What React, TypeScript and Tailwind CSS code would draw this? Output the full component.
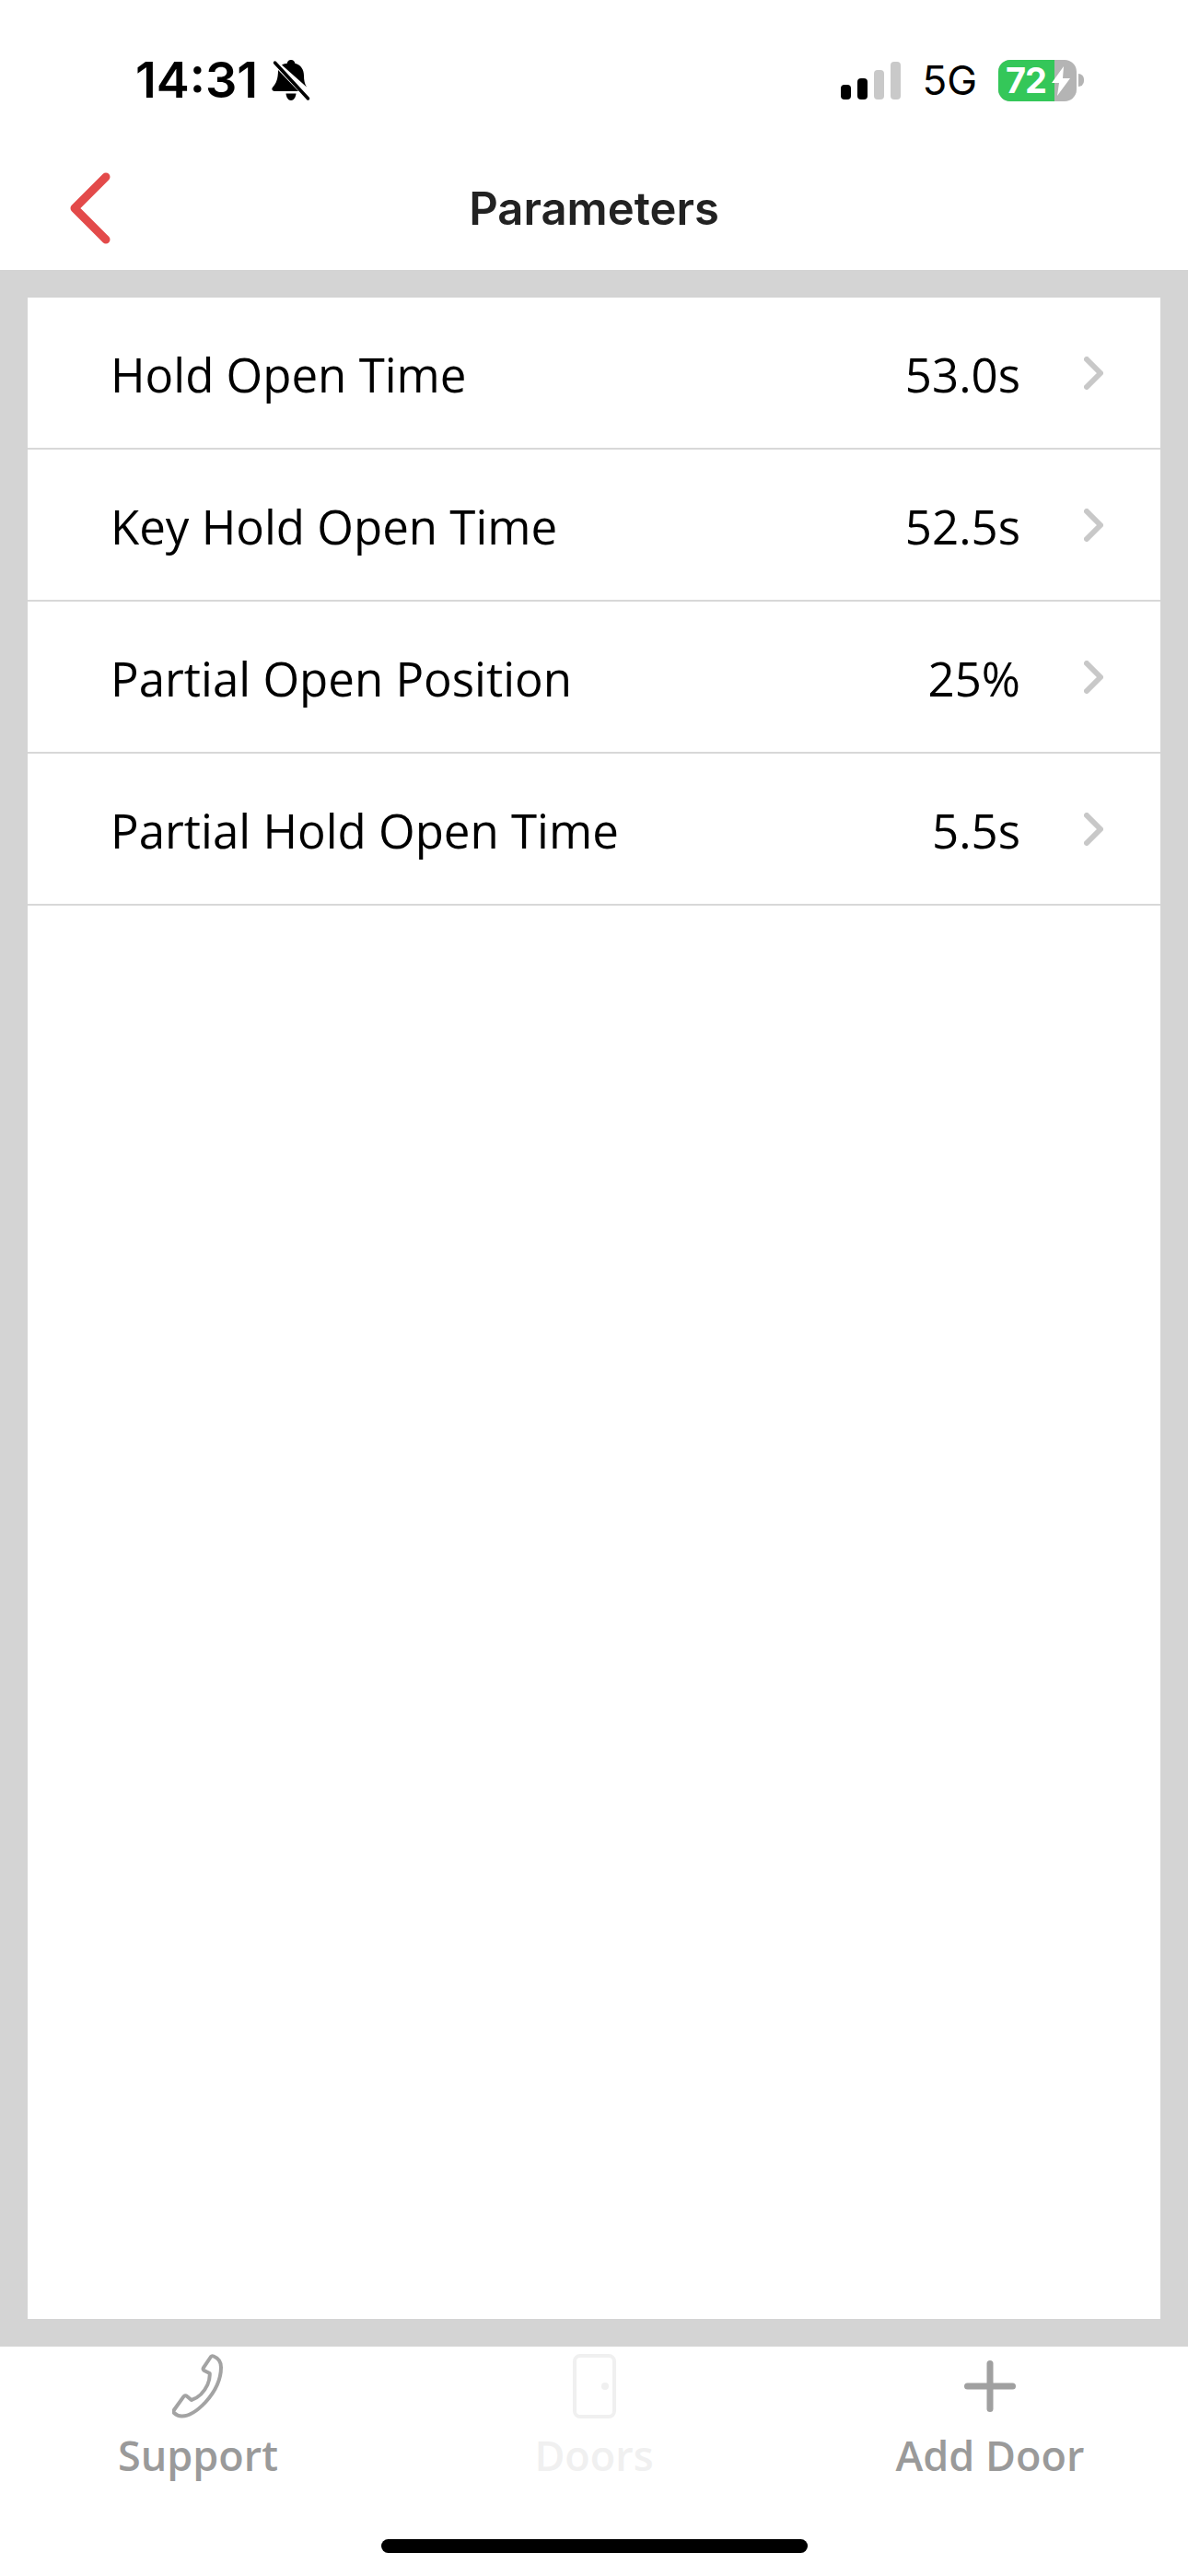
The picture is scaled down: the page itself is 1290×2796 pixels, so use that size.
import type { ReactNode } from "react";
import { Plus } from "lucide-react";

const params = [
  { label: "Hold Open Time", value: "53.0s" },
  { label: "Key Hold Open Time", value: "52.5s" },
  { label: "Partial Open Position", value: "25%" },
  { label: "Partial Hold Open Time", value: "5.5s" },
];

function MutedBell() {
  return (
    <svg viewBox="0 0 42 45" className="w-[42px] h-[45px]">
      <path
        d="M21 0c2.400 0 4 1.600 4.300 3.700 6.200 1.500 9.700 6.600 9.700 13.300 0 5 .7 9 3 12.500L11 5.500C13 4.200 15 4 16.800 3.700 17 1.600 18.600 0 21 0zM7 11 29 34H3.200C.8 34-.5 31.800.9 30c3.900-4.500 6.100-9 6.100-19zM15.500 36.500h11c-.3 4-2.600 7.500-5.500 7.500s-5.200-3.500-5.500-7.500z"
        fill="#000"
      />
      <path d="M3.500 3 39.500 42" stroke="#000" strokeWidth="3.500" strokeLinecap="round" />
    </svg>
  );
}

function Signal() {
  return (
    <div className="flex items-end gap-[7px] h-[41px]">
      <div className="w-[11px] h-[16px] rounded-[4px] bg-black" />
      <div className="w-[11px] h-[23px] rounded-[4px] bg-black" />
      <div className="w-[11px] h-[32px] rounded-[4px] bg-[#c9c9c9]" />
      <div className="w-[11px] h-[41px] rounded-[4px] bg-[#c9c9c9]" />
    </div>
  );
}

function Battery() {
  return (
    <div className="flex items-center gap-[2px]">
      <div className="relative w-[85px] h-[45px] rounded-[13px] overflow-hidden bg-[#b4b4b4] flex">
        <div className="w-[61px] bg-[#34c759]" />
        <span className="absolute left-[8px] top-0 h-[45px] leading-[45px] text-[38px] font-bold text-white font-['Inter',sans-serif] tracking-[-1px]">
          72
        </span>
        <svg viewBox="0 0 20 32" className="absolute left-[58px] top-[7px] w-[20px] h-[32px]">
          <path d="M13 0 0 18h8l-2 14 14-19h-8z" fill="#fff" />
        </svg>
      </div>
      <div className="w-[6px] h-[14px] rounded-r-full bg-[#b4b4b4]" />
    </div>
  );
}

function BackIcon() {
  return (
    <svg viewBox="0 0 44 78" className="w-[44px] h-[78px]" fill="none">
      <path d="M39 5 5 39l34 34" stroke="#e34a4a" strokeWidth="9" strokeLinecap="round" strokeLinejoin="round" />
    </svg>
  );
}

function RowChevron() {
  return (
    <svg viewBox="0 0 21 36" className="w-[21px] h-[36px]" fill="none">
      <path d="M3 3l15 15L3 33" stroke="#c8c8c8" strokeWidth="6" strokeLinecap="round" strokeLinejoin="round" />
    </svg>
  );
}

function PhoneIcon() {
  return (
    <svg viewBox="1 0 56 70" className="w-[56px] h-[70px]" fill="none">
      <path
        d="M46 2.500c5 2 8 5.500 8 12 0 13-7 27-17 38-9 9.500-17 15-25.500 15-3.500 0-6.500-1.500-8.500-3.500-1-1-.8-2.200 0-3.300l10.500-14.500c1-1.300 2.300-1.300 3.300-.4l5 4.200c8-2.500 14-9 17.500-16.500 2-4.500 2.700-8.700 2.400-12.500l-6-3c-1.200-.7-1.500-2-.7-3.200L43 3c.8-1 1.800-1 3-.5z"
        stroke="#a3a3a3"
        strokeWidth="4"
        strokeLinejoin="round"
      />
    </svg>
  );
}

function DoorIcon() {
  return (
    <svg viewBox="0 0 47 70" className="w-[47px] h-[70px]" fill="none">
      <rect x="2" y="2" width="43" height="66" rx="6" stroke="#f0f0f0" strokeWidth="4" />
      <circle cx="35" cy="35" r="4" fill="#f0f0f0" />
    </svg>
  );
}

function TabItem({ icon, label, color }: { icon: ReactNode; label: string; color: string }) {
  return (
    <div className="flex-1 flex flex-col items-center">
      <div className="h-[70px] flex items-center justify-center">{icon}</div>
      <span className={`mt-[11px] text-[45px] leading-[58px] font-semibold ${color}`}>{label}</span>
    </div>
  );
}

export default function App() {
  return (
    <div className="w-[1290px] h-[2796px] bg-white flex flex-col font-['Open_Sans',sans-serif] overflow-hidden">
      {/* status bar */}
      <div className="h-[176px] shrink-0 flex items-start justify-between pt-[58px] pl-[147px] pr-[113px]">
        <div className="flex items-center gap-[15px]">
          <span className="text-[54px] leading-[58px] font-semibold text-black font-['Inter',sans-serif]">14:31</span>
          <MutedBell />
        </div>
        <div className="flex items-center gap-[23px] pt-[6px]">
          <Signal />
          <span className="text-[44px] leading-[46px] text-black font-['Inter',sans-serif]">5G</span>
          <Battery />
        </div>
      </div>

      {/* nav */}
      <div className="h-[117px] shrink-0 grid grid-cols-[1fr_auto_1fr] items-start pl-[76px]">
        <div className="pt-[11px]">
          <BackIcon />
        </div>
        <span className="-ml-[76px] text-[49px] leading-[60px] pt-[21px] font-semibold text-[#222] font-['Inter',sans-serif]">
          Parameters
        </span>
        <div />
      </div>

      {/* content */}
      <div className="h-[2254px] shrink-0 bg-[#d4d4d4] p-[30px]">
        <div className="h-full bg-white">
          {params.map((p) => (
            <div
              key={p.label}
              className="h-[165px] flex items-center justify-between border-b-2 border-[#d8d8d8] pl-[90px] pr-[62px] text-black"
            >
              <span className="text-[51px] pt-[4px]">{p.label}</span>
              <div className="flex items-center gap-[70px]">
                <span className="text-[51px] pt-[4px] translate-x-[1px]">{p.value}</span>
                <RowChevron />
              </div>
            </div>
          ))}
        </div>
      </div>

      {/* tab bar */}
      <div className="flex-1 flex flex-col pt-[8px]">
        <div className="flex">
          <TabItem icon={<PhoneIcon />} label="Support" color="text-[#9a9a9a]" />
          <TabItem icon={<DoorIcon />} label="Doors" color="text-[#f0f0f0]" />
          <TabItem
            icon={<Plus className="w-[84px] h-[84px] text-[#a0a0a0]" strokeWidth={2} />}
            label="Add Door"
            color="text-[#9a9a9a]"
          />
        </div>
        <div className="mt-[62px] self-center w-[463px] h-[15px] rounded-full bg-black" />
      </div>
    </div>
  );
}
